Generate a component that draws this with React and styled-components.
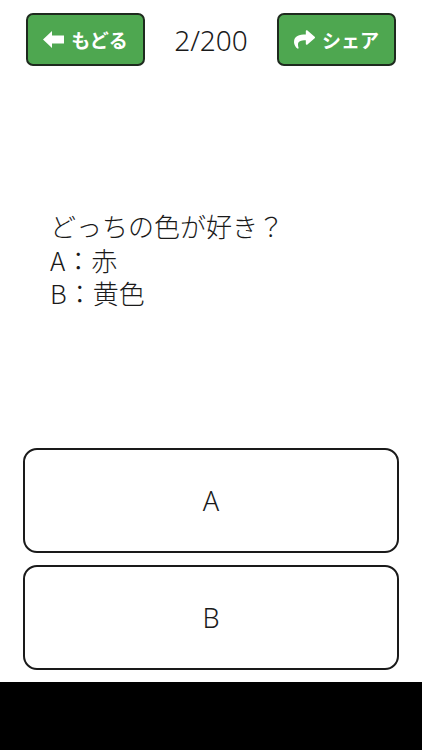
import React from "react";
import styled, { createGlobalStyle } from "styled-components";
import { FaShare } from "react-icons/fa";

const Global = createGlobalStyle`
  html, body { margin: 0; padding: 0; background: #fff; }
  body { font-family: "Noto Sans CJK JP", "Noto Sans", sans-serif; color: #222; }
  #root { height: 750px; }
`;

const Screen = styled.div`
  width: 422px;
  height: 750px;
  display: flex;
  flex-direction: column;
  background: #fff;
`;

const Main = styled.div`
  flex: 1;
  display: flex;
  flex-direction: column;
  padding: 13px 23px 12px 23px;
`;

const Toolbar = styled.div`
  display: flex;
  align-items: center;
  justify-content: space-between;
  padding: 0 3px;
`;

const NavButton = styled.button`
  width: 119px;
  height: 53px;
  box-sizing: border-box;
  background: #4ea750;
  border: 2px solid #1e2a1e;
  border-radius: 7px;
  color: #fff;
  display: flex;
  align-items: center;
  justify-content: center;
  gap: 7px;
  font-family: "Noto Sans CJK JP", sans-serif;
  font-weight: 700;
  font-size: 19px;
  padding: 0;
  svg { font-size: 21px; flex: none; }
`;

const Counter = styled.div`
  font-family: "Noto Sans", "Noto Sans CJK JP", sans-serif;
  font-weight: 300;
  font-size: 28px;
  color: #1a1a1a;
`;

const Question = styled.div`
  margin-top: 143px;
  padding-left: 27px;
  display: flex;
  flex-direction: column;
  font-size: 26px;
  color: #1a1a1a;
  font-weight: 300;
`;

const QLine = styled.div`
  height: 33.5px;
  line-height: 33.5px;
`;

const Options = styled.div`
  margin-top: auto;
  display: flex;
  flex-direction: column;
  gap: 12px;
`;

const Option = styled.button`
  height: 105px;
  width: 100%;
  box-sizing: border-box;
  background: #fff;
  border: 2px solid #1a1a1a;
  border-radius: 14px;
  font-family: "Noto Sans", "Noto Sans CJK JP", sans-serif;
  font-weight: 300;
  font-size: 27px;
  color: #1a1a1a;
`;

const BottomBar = styled.div`
  height: 68px;
  background: #000;
`;

const BackArrow = () => (
  <svg width="21" height="17" viewBox="0 0 21 17" fill="#fff">
    <polygon points="0,8.5 9,0 9,4.5 21,4.5 21,12.5 9,12.5 9,17" />
  </svg>
);

export default function App() {
  return (
    <>
      <Global />
      <Screen>
        <Main>
          <Toolbar>
            <NavButton><BackArrow />もどる</NavButton>
            <Counter>2/200</Counter>
            <NavButton><FaShare />シェア</NavButton>
          </Toolbar>
          <Question>
            <QLine>どっちの色が好き？</QLine>
            <QLine>A：赤</QLine>
            <QLine>B：黄色</QLine>
          </Question>
          <Options>
            <Option>A</Option>
            <Option>B</Option>
          </Options>
        </Main>
        <BottomBar />
      </Screen>
    </>
  );
}
